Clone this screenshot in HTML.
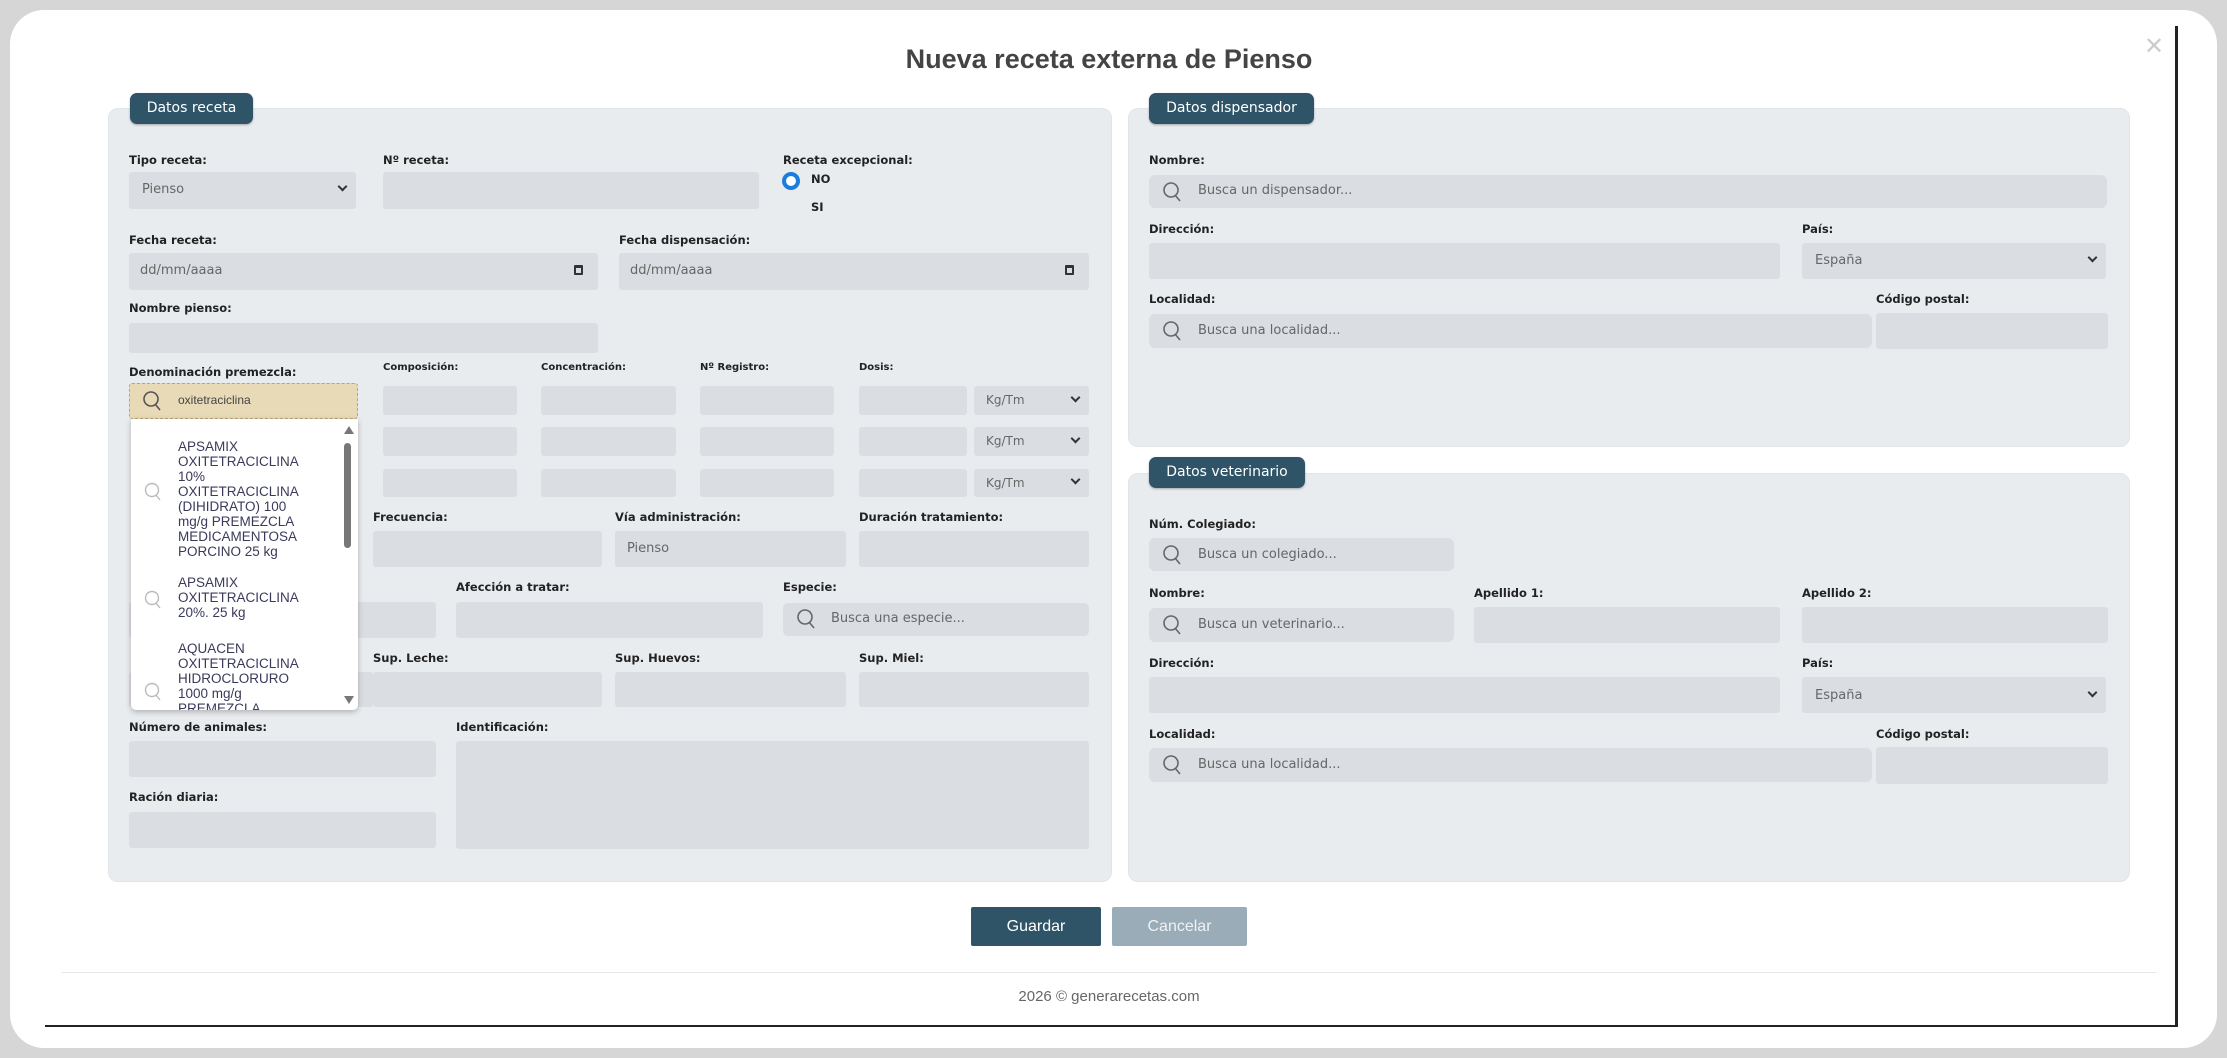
<!DOCTYPE html>
<html><head><meta charset="utf-8"><style>
*{box-sizing:border-box;margin:0;padding:0}
body{width:2227px;height:1058px;background:#d6d6d6;position:relative;overflow:hidden;font-family:"DejaVu Sans","Liberation Sans",sans-serif}
.frame{position:absolute;left:10px;top:10px;width:2207px;height:1038px;background:#fff;border-radius:34px}
.a{position:absolute}
.panel{position:absolute;background:#e9ecef;border:1px solid #e2e5e8;border-radius:10px}
.leg{position:absolute;background:#2f5468;color:#fff;font-size:14px;border-radius:7px;height:31px;line-height:31px;text-align:center;box-shadow:0 1px 2px rgba(0,0,0,.3)}
.l{position:absolute;font-size:11.5px;font-weight:bold;color:#222;white-space:nowrap}
.ls{font-size:10px}
.i{position:absolute;background:#dadee2;border-radius:3px}
.t{position:absolute;font-size:13px;color:#666;white-space:nowrap}
.chev{position:absolute;width:7px;height:7px;border-right:2px solid #333;border-bottom:2px solid #333;transform:rotate(45deg)}
.dd{position:absolute;left:131px;top:419px;width:227px;height:291px;background:#fff;box-shadow:0 2px 6px rgba(0,0,0,.25);border-radius:0 0 5px 5px;overflow:hidden}
.it{position:absolute;left:47px;font-family:"Liberation Sans",sans-serif;font-size:13.5px;line-height:15px;color:#3a3a5a;width:140px}
</style></head><body>
<div class="frame"></div>
<div class="a" style="left:2175px;top:26px;width:3px;height:1001px;background:#222"></div>
<div class="a" style="left:45px;top:1025px;width:2133px;height:2px;background:#222"></div>
<div class="a" style="left:0;top:44px;width:2218px;text-align:center;font-family:'Liberation Sans',sans-serif;font-weight:bold;font-size:27px;color:#444">Nueva receta externa de Pienso</div>
<div class="a" style="left:2144px;top:32px;font-family:'Liberation Sans',sans-serif;font-size:24px;color:#ccc">✕</div>

<!-- Left panel -->
<div class="panel" style="left:108px;top:108px;width:1004px;height:774px"></div>
<div class="leg" style="left:130px;top:93px;width:123px">Datos receta</div>

<div class="l" style="left:129px;top:153px">Tipo receta:</div>
<div class="i" style="left:129px;top:172px;width:227px;height:37px"></div>
<div class="t" style="left:142px;top:182px">Pienso</div><div class="chev" style="left:339px;top:183px"></div>
<div class="l" style="left:383px;top:153px">Nº receta:</div>
<div class="i" style="left:383px;top:172px;width:376px;height:37px"></div>
<div class="l" style="left:783px;top:153px">Receta excepcional:</div>
<div class="a" style="left:782px;top:172px;width:18px;height:18px;border-radius:50%;border:4px solid #1a7de0;background:#fff"></div>
<div class="l" style="left:811px;top:172px">NO</div>
<div class="l" style="left:811px;top:200px">SI</div>

<div class="l" style="left:129px;top:233px">Fecha receta:</div>
<div class="i" style="left:129px;top:253px;width:469px;height:37px"></div>
<div class="t" style="left:140px;top:263px">dd/mm/aaaa</div>
<div class="a" style="left:574px;top:265px;width:9px;height:10px;border:2px solid #333;border-top-width:3px;border-radius:1px"></div>
<div class="l" style="left:619px;top:233px">Fecha dispensación:</div>
<div class="i" style="left:619px;top:253px;width:470px;height:37px"></div>
<div class="t" style="left:630px;top:263px">dd/mm/aaaa</div>
<div class="a" style="left:1065px;top:265px;width:9px;height:10px;border:2px solid #333;border-top-width:3px;border-radius:1px"></div>

<div class="l" style="left:129px;top:301px">Nombre pienso:</div>
<div class="i" style="left:129px;top:323px;width:469px;height:30px"></div>

<div class="l" style="left:129px;top:365px">Denominación premezcla:</div>
<div class="l ls" style="left:383px;top:362px">Composición:</div>
<div class="l ls" style="left:541px;top:362px">Concentración:</div>
<div class="l ls" style="left:700px;top:362px">Nº Registro:</div>
<div class="l ls" style="left:859px;top:362px">Dosis:</div>

<div class="i" style="left:383px;top:386px;width:134px;height:29px"></div><div class="i" style="left:541px;top:386px;width:135px;height:29px"></div><div class="i" style="left:700px;top:386px;width:134px;height:29px"></div><div class="i" style="left:859px;top:386px;width:108px;height:29px"></div><div class="i" style="left:974px;top:386px;width:115px;height:29px"></div><div class="t" style="left:986px;top:393px;font-size:12px">Kg/Tm</div><div class="chev" style="left:1072px;top:394px"></div>
<div class="i" style="left:383px;top:427px;width:134px;height:29px"></div><div class="i" style="left:541px;top:427px;width:135px;height:29px"></div><div class="i" style="left:700px;top:427px;width:134px;height:29px"></div><div class="i" style="left:859px;top:427px;width:108px;height:29px"></div><div class="i" style="left:974px;top:427px;width:115px;height:29px"></div><div class="t" style="left:986px;top:434px;font-size:12px">Kg/Tm</div><div class="chev" style="left:1072px;top:435px"></div>
<div class="i" style="left:383px;top:469px;width:134px;height:28px"></div><div class="i" style="left:541px;top:469px;width:135px;height:28px"></div><div class="i" style="left:700px;top:469px;width:134px;height:28px"></div><div class="i" style="left:859px;top:469px;width:108px;height:28px"></div><div class="i" style="left:974px;top:469px;width:115px;height:28px"></div><div class="t" style="left:986px;top:476px;font-size:12px">Kg/Tm</div><div class="chev" style="left:1072px;top:476px"></div>

<div class="l" style="left:373px;top:510px">Frecuencia:</div>
<div class="i" style="left:373px;top:531px;width:229px;height:36px"></div>
<div class="l" style="left:615px;top:510px">Vía administración:</div>
<div class="i" style="left:615px;top:531px;width:231px;height:36px"></div><div class="t" style="left:627px;top:541px">Pienso</div>
<div class="l" style="left:859px;top:510px">Duración tratamiento:</div>
<div class="i" style="left:859px;top:531px;width:230px;height:36px"></div>

<div class="i" style="left:129px;top:602px;width:307px;height:36px"></div>
<div class="l" style="left:456px;top:580px">Afección a tratar:</div>
<div class="i" style="left:456px;top:602px;width:307px;height:36px"></div>
<div class="l" style="left:783px;top:580px">Especie:</div>
<div class="i" style="left:783px;top:603px;width:306px;height:33px;border-radius:5px"></div>
<svg class="a" style="left:795px;top:608px" width="22" height="22" viewBox="0 0 22 22"><circle cx="10" cy="9" r="7" fill="none" stroke="#666" stroke-width="1.6"/><path d="M14 14l5 6" stroke="#666" stroke-width="1.6"/></svg>
<div class="t" style="left:831px;top:611px">Busca una especie...</div>

<div class="i" style="left:129px;top:672px;width:244px;height:35px"></div>
<div class="l" style="left:373px;top:651px">Sup. Leche:</div>
<div class="i" style="left:373px;top:672px;width:229px;height:35px"></div>
<div class="l" style="left:615px;top:651px">Sup. Huevos:</div>
<div class="i" style="left:615px;top:672px;width:231px;height:35px"></div>
<div class="l" style="left:859px;top:651px">Sup. Miel:</div>
<div class="i" style="left:859px;top:672px;width:230px;height:35px"></div>

<div class="l" style="left:129px;top:720px">Número de animales:</div>
<div class="i" style="left:129px;top:741px;width:307px;height:36px"></div>
<div class="l" style="left:456px;top:720px">Identificación:</div>
<div class="i" style="left:456px;top:741px;width:633px;height:108px"></div>
<div class="l" style="left:129px;top:790px">Ración diaria:</div>
<div class="i" style="left:129px;top:812px;width:307px;height:36px"></div>

<!-- search premezcla -->
<div class="a" style="left:129px;top:383px;width:229px;height:36px;background:#e8dab6;border:1px dashed #b8a57a;border-radius:3px"></div>
<svg class="a" style="left:141px;top:389px" width="22" height="24" viewBox="0 0 22 24"><circle cx="10" cy="10" r="7" fill="none" stroke="#555" stroke-width="1.6"/><path d="M14 15l5 6" stroke="#555" stroke-width="1.6"/></svg>
<div class="t" style="left:178px;top:393px;font-size:12px;color:#444;font-family:'Liberation Sans',sans-serif">oxitetraciclina</div>
<div class="dd">
 <div class="it" style="top:20px">APSAMIX OXITETRACICLINA 10% OXITETRACICLINA (DIHIDRATO) 100 mg/g PREMEZCLA MEDICAMENTOSA PORCINO 25 kg</div>
 <svg class="a" style="left:12px;top:62px" width="20" height="22" viewBox="0 0 20 22"><circle cx="9" cy="9" r="6.5" fill="none" stroke="#bbb" stroke-width="1.4"/><path d="M13 14l4 5" stroke="#bbb" stroke-width="1.4"/></svg>
 <div class="it" style="top:156px">APSAMIX OXITETRACICLINA 20%. 25 kg</div>
 <svg class="a" style="left:12px;top:170px" width="20" height="22" viewBox="0 0 20 22"><circle cx="9" cy="9" r="6.5" fill="none" stroke="#bbb" stroke-width="1.4"/><path d="M13 14l4 5" stroke="#bbb" stroke-width="1.4"/></svg>
 <div class="it" style="top:222px">AQUACEN OXITETRACICLINA HIDROCLORURO 1000 mg/g PREMEZCLA</div>
 <svg class="a" style="left:12px;top:262px" width="20" height="22" viewBox="0 0 20 22"><circle cx="9" cy="9" r="6.5" fill="none" stroke="#bbb" stroke-width="1.4"/><path d="M13 14l4 5" stroke="#bbb" stroke-width="1.4"/></svg>
 <div class="a" style="left:213px;top:7px;width:0;height:0;border-left:5px solid transparent;border-right:5px solid transparent;border-bottom:8px solid #777"></div>
 <div class="a" style="left:213px;top:24px;width:7px;height:105px;background:#777;border-radius:4px"></div>
 <div class="a" style="left:213px;top:277px;width:0;height:0;border-left:5px solid transparent;border-right:5px solid transparent;border-top:8px solid #777"></div>
</div>

<!-- Right top -->
<div class="panel" style="left:1128px;top:108px;width:1002px;height:339px"></div>
<div class="leg" style="left:1149px;top:93px;width:165px">Datos dispensador</div>
<div class="l" style="left:1149px;top:153px">Nombre:</div>
<div class="i" style="left:1149px;top:175px;width:958px;height:33px;border-radius:6px"></div>
<svg class="a" style="left:1161px;top:180px" width="22" height="24" viewBox="0 0 22 24"><circle cx="10" cy="10" r="7" fill="none" stroke="#666" stroke-width="1.6"/><path d="M14 15l5 6" stroke="#666" stroke-width="1.6"/></svg>
<div class="t" style="left:1198px;top:183px">Busca un dispensador...</div>
<div class="l" style="left:1149px;top:222px">Dirección:</div>
<div class="i" style="left:1149px;top:243px;width:631px;height:36px"></div>
<div class="l" style="left:1802px;top:222px">País:</div>
<div class="i" style="left:1802px;top:243px;width:304px;height:36px"></div><div class="t" style="left:1815px;top:253px">España</div><div class="chev" style="left:2089px;top:254px"></div>
<div class="l" style="left:1149px;top:292px">Localidad:</div>
<div class="i" style="left:1149px;top:314px;width:723px;height:34px;border-radius:6px"></div>
<svg class="a" style="left:1161px;top:319px" width="22" height="24" viewBox="0 0 22 24"><circle cx="10" cy="10" r="7" fill="none" stroke="#666" stroke-width="1.6"/><path d="M14 15l5 6" stroke="#666" stroke-width="1.6"/></svg>
<div class="t" style="left:1198px;top:323px">Busca una localidad...</div>
<div class="l" style="left:1876px;top:292px">Código postal:</div>
<div class="i" style="left:1876px;top:313px;width:232px;height:36px"></div>

<!-- Right bottom -->
<div class="panel" style="left:1128px;top:473px;width:1002px;height:409px"></div>
<div class="leg" style="left:1149px;top:457px;width:156px">Datos veterinario</div>
<div class="l" style="left:1149px;top:517px">Núm. Colegiado:</div>
<div class="i" style="left:1149px;top:538px;width:305px;height:33px;border-radius:6px"></div>
<svg class="a" style="left:1161px;top:543px" width="22" height="24" viewBox="0 0 22 24"><circle cx="10" cy="10" r="7" fill="none" stroke="#666" stroke-width="1.6"/><path d="M14 15l5 6" stroke="#666" stroke-width="1.6"/></svg>
<div class="t" style="left:1198px;top:547px">Busca un colegiado...</div>
<div class="l" style="left:1149px;top:586px">Nombre:</div>
<div class="i" style="left:1149px;top:608px;width:305px;height:34px;border-radius:6px"></div>
<svg class="a" style="left:1161px;top:613px" width="22" height="24" viewBox="0 0 22 24"><circle cx="10" cy="10" r="7" fill="none" stroke="#666" stroke-width="1.6"/><path d="M14 15l5 6" stroke="#666" stroke-width="1.6"/></svg>
<div class="t" style="left:1198px;top:617px">Busca un veterinario...</div>
<div class="l" style="left:1474px;top:586px">Apellido 1:</div>
<div class="i" style="left:1474px;top:607px;width:306px;height:36px"></div>
<div class="l" style="left:1802px;top:586px">Apellido 2:</div>
<div class="i" style="left:1802px;top:607px;width:306px;height:36px"></div>
<div class="l" style="left:1149px;top:656px">Dirección:</div>
<div class="i" style="left:1149px;top:677px;width:631px;height:36px"></div>
<div class="l" style="left:1802px;top:656px">País:</div>
<div class="i" style="left:1802px;top:677px;width:304px;height:36px"></div><div class="t" style="left:1815px;top:688px">España</div><div class="chev" style="left:2089px;top:689px"></div>
<div class="l" style="left:1149px;top:727px">Localidad:</div>
<div class="i" style="left:1149px;top:748px;width:723px;height:34px;border-radius:6px"></div>
<svg class="a" style="left:1161px;top:753px" width="22" height="24" viewBox="0 0 22 24"><circle cx="10" cy="10" r="7" fill="none" stroke="#666" stroke-width="1.6"/><path d="M14 15l5 6" stroke="#666" stroke-width="1.6"/></svg>
<div class="t" style="left:1198px;top:757px">Busca una localidad...</div>
<div class="l" style="left:1876px;top:727px">Código postal:</div>
<div class="i" style="left:1876px;top:747px;width:232px;height:37px"></div>

<!-- buttons -->
<div class="a" style="left:971px;top:907px;width:130px;height:39px;background:#2f5468;color:#fff;font-family:'Liberation Sans',sans-serif;font-size:16px;line-height:39px;text-align:center;border-radius:2px">Guardar</div>
<div class="a" style="left:1112px;top:907px;width:135px;height:39px;background:#9aacb8;color:#eef2f5;font-family:'Liberation Sans',sans-serif;font-size:16px;line-height:39px;text-align:center;border-radius:2px">Cancelar</div>

<div class="a" style="left:62px;top:972px;width:2094px;height:1px;background:#e6e6e6"></div>
<div class="a" style="left:0;top:988px;width:2218px;text-align:center;font-family:'Liberation Sans',sans-serif;font-size:15px;color:#666">2026 © generarecetas.com</div>
</body></html>
